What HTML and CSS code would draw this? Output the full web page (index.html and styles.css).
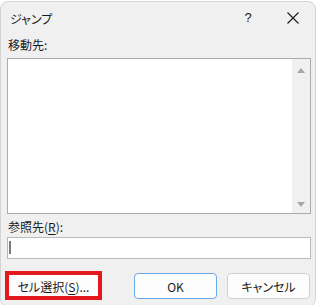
FILE: index.html
```html
<!DOCTYPE html>
<html lang="ja">
<head>
<meta charset="utf-8">
<title>ジャンプ</title>
<link rel="stylesheet" href="styles.css">
</head>
<body>
<div class="win">
  <div class="titlebar">
    <div class="title">ジャンプ</div>
    <div class="tb-btn help">?</div>
    <div class="tb-btn close">
      <svg width="12" height="12" viewBox="0 0 12 12"><path d="M0.5 0.5 L11.5 11.5 M11.5 0.5 L0.5 11.5" stroke="#1a1a1a" stroke-width="1.1" fill="none"/></svg>
    </div>
  </div>
  <div class="content">
    <div class="label">移動先:</div>
    <div class="listbox">
      <div class="list-area"></div>
      <div class="vscroll">
        <span class="arrow up"></span>
        <span class="arrow down"></span>
      </div>
    </div>
    <div class="label label2">参照先(<u>R</u>):</div>
    <div class="input"><span class="caret"></span></div>
    <div class="buttons">
      <div class="hl"><div class="btn btn-cell">セル選択(<u>S</u>)...</div></div>
      <div class="btn btn-ok">OK</div>
      <div class="btn btn-cancel">キャンセル</div>
    </div>
  </div>
</div>
</body>
</html>
```
FILE: styles.css
```css
* { box-sizing: border-box; }
html, body { margin: 0; padding: 0; background: #ffffff; }
body {
  font-family: "Noto Sans CJK JP", "Noto Sans", sans-serif;
  font-size: 12px;
  color: #1a1a1a;
  font-feature-settings: "palt";
}
.win {
  margin-top: 1px;
  width: 316px;
  height: 306px;
  background: #f0f0f0;
  border: 1px solid #d4d4d4;
  border-radius: 8px;
  overflow: hidden;
}
.titlebar {
  height: 31px;
  display: flex;
  align-items: center;
}
.title {
  flex: 1;
  padding-left: 9px;
  padding-top: 1px;
  font-size: 12px;
}
.tb-btn {
  width: 46px;
  height: 31px;
  display: flex;
  align-items: center;
  justify-content: center;
}
.help { padding-left: 4px; font-size: 13px; font-family: "Liberation Sans", sans-serif; }
.close svg { display: block; margin-left: 1px; }
.content {
  padding: 0 4px 0 6px;
}
.label {
  height: 18px;
  line-height: 18px;
  margin-top: 3px;
  padding-left: 1px;
}
.label u { text-underline-offset: 2px; }
.listbox {
  margin-top: 4px;
  height: 156px;
  border: 1px solid #ababab;
  background: #ffffff;
  display: flex;
}
.list-area { flex: 1; }
.vscroll {
  width: 18px;
  background: #f0f0f0;
  display: flex;
  flex-direction: column;
  justify-content: space-between;
  align-items: center;
  padding: 9px 0 6px 0;
}
.arrow {
  width: 0; height: 0;
  border-left: 4px solid transparent;
  border-right: 4px solid transparent;
}
.arrow.up { border-bottom: 5px solid #a6a6a6; }
.arrow.down { border-top: 5px solid #a6a6a6; }
.label2 { margin-top: 4px; }
.input {
  margin-top: 1px;
  height: 22px;
  border: 1px solid #b9b9b9;
  background: #ffffff;
  padding: 3px 0 0 1px;
}
.caret {
  display: block;
  width: 2px;
  height: 13px;
  background: #7a7a7a;
}
.buttons {
  margin-top: 14px;
  display: flex;
  align-items: center;
  padding-right: 1px;
}
.btn {
  height: 26px;
  border: 1px solid #d0d0d0;
  border-radius: 4px;
  background: #fdfdfd;
  display: flex;
  align-items: center;
  justify-content: center;
}
.btn u { text-underline-offset: 2px; }
.hl { position: relative; }
.hl::after {
  content: "";
  position: absolute;
  top: -2px; left: -2px; right: -2px; bottom: -1px;
  border: 4px solid #e3191d;
}
.btn-cell { width: 93px; padding-top: 1px; }
.btn-ok {
  margin-left: auto;
  width: 83px;
  border-color: #6aa9e9;
}
.btn-cancel {
  margin-left: 10px;
  width: 83px;
}
```
